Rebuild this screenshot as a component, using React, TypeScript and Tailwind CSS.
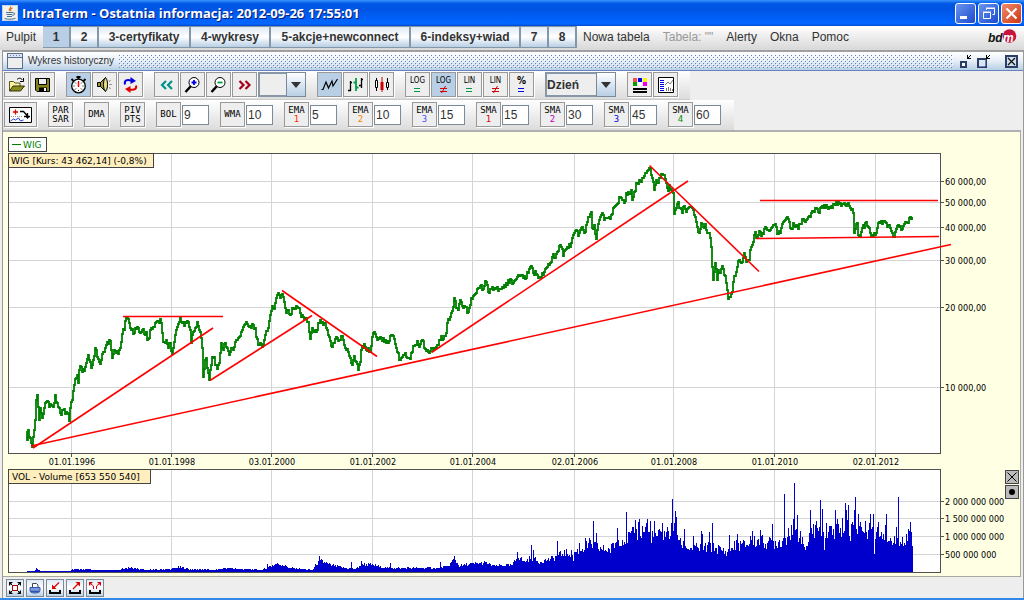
import type { ReactNode } from 'react';
import clsx from 'clsx';

type Point = [number, number];

const GRID_X = [71, 171, 271, 372, 472, 574, 673, 774, 875];
const DATES = [
  '01.01.1996',
  '01.01.1998',
  '03.01.2000',
  '01.01.2002',
  '01.01.2004',
  '02.01.2006',
  '01.01.2008',
  '01.01.2010',
  '02.01.2012',
];

const PRICE_TICKS: [number, string][] = [
  [181, '60 000,00'],
  [202, '50 000,00'],
  [227, '40 000,00'],
  [260, '30 000,00'],
  [307, '20 000,00'],
  [387, '10 000,00'],
];

const VOLUME_TICKS: [number, string][] = [
  [501, '2 000 000 000'],
  [518, '1 500 000 000'],
  [536, '1 000 000 000'],
  [554, '500 000 000'],
];

const TREND_LINES = [
  'M123 316.5H223',
  'M33 448L213 328',
  'M31 446L951 244.5',
  'M210 380.5L312 315.5',
  'M282 290.5L377 356.5',
  'M431.5 352.5L688 181',
  'M649.5 165.5L759 271.5',
  'M760 200.5H938',
  'M756 238.5L939 236.5',
];

const WIG =
  '27,431 28,440 29,430 31,438 32,443 33,447 35,430 36,420 37,400 38,395 39,407 40,420 41,408 43,418 45,408 46,403 48,401 50,407 52,405 54,407 56,395 57,402 59,407 61,413 62,415 64,410 66,414 69,414 70,421 71,408 73,400 75,385 76,379 78,375 79,383 80,370 81,366 83,372 85,371 87,363 89,355 90,360 92,368 94,360 96,348 98,357 100,362 102,360 104,352 106,348 108,342 111,341 112,350 113,358 115,350 117,353 120,350 122,342 123,334 125,330 126,321 128,318 130,323 132,330 134,334 136,328 138,327 140,332 143,330 145,334 147,332 148,340 150,338 152,328 154,327 156,323 158,321 160,323 161,319 163,333 164,342 166,343 167,340 169,348 171,343 173,354 174,348 176,335 178,327 180,322 181,318 183,323 185,326 186,322 188,321 190,327 191,330 192,343 194,332 196,328 198,322 200,330 202,338 203,348 204,377 206,360 207,358 209,373 210,380 211,370 213,357 215,357 216,365 218,369 220,363 222,343 224,350 225,344 228,348 230,355 232,348 234,350 236,342 238,340 240,337 243,330 246,324 247,322 250,327 252,328 254,325 256,328 257,337 259,345 261,343 264,345 266,335 269,328 271,315 273,306 275,309 277,298 279,293 281,298 283,294 285,302 287,313 289,310 291,315 293,308 296,309 299,308 301,313 304,317 306,318 309,322 310,332 311,339 313,328 315,332 317,332 319,323 321,320 324,325 326,323 328,330 330,337 332,346 335,343 337,337 340,340 343,336 345,345 347,350 349,352 351,358 353,365 355,356 357,362 359,370 361,362 362,350 365,344 367,350 369,348 371,351 373,337 375,332 377,337 380,339 383,341 386,340 390,341 392,335 395,339 397,348 399,353 400,360 403,357 406,353 408,358 411,359 412,353 414,346 416,345 418,341 420,347 423,340 425,348 428,350 431,351 435,348 438,345 441,340 445,336 447,333 448,323 450,320 452,313 454,307 455,298 457,308 459,310 461,300 464,308 466,307 468,313 470,308 472,298 475,295 477,293 479,288 481,286 483,290 486,281 488,285 490,293 493,287 496,289 498,287 501,289 504,288 507,283 511,279 514,283 517,279 521,276 523,275 526,279 529,273 531,267 534,273 536,271 539,278 542,278 545,272 548,267 551,263 553,257 556,258 558,252 560,246 562,247 564,256 566,250 569,248 572,243 574,235 577,230 579,236 582,228 585,233 587,225 589,217 592,212 593,228 595,225 597,239 598,230 600,220 603,213 605,220 607,218 610,217 612,215 615,207 617,205 619,203 621,197 623,200 625,203 627,193 629,192 630,194 632,190 633,200 635,192 638,183 641,181 644,178 646,173 650,168 652,175 654,182 655,190 657,180 658,183 660,178 663,174 665,175 667,183 669,191 670,185 672,189 674,193 674,207 675,214 677,208 679,202 681,208 683,213 685,206 687,212 690,207 692,207 694,210 696,217 699,232 700,233 702,223 704,227 706,224 708,233 710,233 712,247 713,267 714,280 716,263 718,280 719,270 721,273 723,266 725,275 727,283 728,290 729,299 731,297 733,292 734,282 736,276 738,267 740,260 742,263 745,253 747,262 750,260 751,250 753,245 754,242 756,232 757,238 759,235 761,232 764,234 766,227 769,230 772,228 774,225 776,224 778,234 781,233 783,224 786,220 788,217 790,222 792,229 794,223 796,227 799,229 801,224 803,219 806,222 809,217 812,213 814,211 817,208 820,213 822,207 826,208 830,207 833,208 836,205 839,202 842,206 845,203 848,204 850,206 853,209 854,213 855,233 858,223 859,235 861,237 863,228 866,223 869,227 871,233 874,237 876,235 878,228 880,222 883,224 886,222 888,227 890,225 892,231 895,237 897,229 900,227 903,229 906,222 908,223 910,218 911,217 913,218';

// [x, typical bar height]
const VOLUME_LEVELS: Point[] = [
  [27, 1], [34, 1], [36, 3], [41, 1], [70, 1], [72, 3], [84, 3], [95, 2], [119, 2], [125, 4], [131, 4], [145, 2],
  [172, 3], [178, 5], [188, 3], [215, 2], [225, 4], [240, 3], [262, 2], [268, 5], [276, 8], [283, 7], [290, 4],
  [312, 2], [316, 8], [321, 11], [330, 7], [345, 4], [355, 3], [362, 8], [373, 7], [385, 4], [440, 4], [448, 6],
  [454, 13], [459, 6], [470, 8], [486, 9], [494, 6], [512, 7], [518, 16], [524, 10], [531, 15], [538, 10], [550, 13],
  [558, 16], [563, 19], [572, 18], [580, 22], [590, 28], [600, 23], [610, 22], [617, 32], [625, 33], [635, 38],
  [645, 42], [652, 36], [660, 36], [670, 40], [676, 42], [680, 28], [690, 23], [700, 24], [710, 25], [718, 23],
  [727, 19], [735, 27], [745, 27], [757, 31], [770, 29], [780, 30], [790, 38], [796, 39], [801, 29], [806, 25],
  [812, 40], [820, 43], [830, 42], [840, 41], [850, 44], [858, 44], [866, 41], [878, 41], [884, 39], [892, 29],
  [900, 33], [905, 28], [910, 36], [912, 28],
];

const VOLUME_SPIKES: Record<number, number> = {
  267: 8, 319: 16, 320: 12, 351: 10, 361: 11, 390: 9, 440: 10, 454: 16, 517: 20, 531: 27, 533: 22, 557: 31, 573: 11,
  579: 29, 585: 34, 593: 51, 596: 39, 617: 44, 626: 60, 635: 52, 638: 50, 639: 53, 646: 49, 647: 53, 650: 51, 654: 51,
  662: 49, 672: 73, 675: 61, 676: 55, 684: 43, 693: 36, 701: 41, 702: 38, 709: 40, 712: 49, 729: 37, 737: 38, 750: 36,
  752: 41, 760: 42, 772: 48, 784: 78, 788: 44, 793: 53, 794: 89, 797: 57, 800: 41, 805: 22, 810: 62, 813: 48, 816: 51,
  820: 72, 822: 63, 824: 22, 835: 62, 837: 53, 842: 54, 845: 69, 846: 62, 848: 67, 850: 31, 855: 75, 854: 62, 858: 58,
  860: 50, 869: 49, 870: 58, 873: 58, 874: 18, 878: 50, 885: 47, 886: 58, 896: 45, 898: 75, 906: 38, 908: 43, 910: 50,
  911: 40, 912: 26,
};

function noise(i: number) {
  const v = Math.sin(i * 12.9898) * 43758.5453;
  return v - Math.floor(v);
}

function levelAt(x: number) {
  const i = VOLUME_LEVELS.findIndex((p) => p[0] > x);
  if (i <= 0) return VOLUME_LEVELS[i === 0 ? 0 : VOLUME_LEVELS.length - 1][1];
  const [x0, h0] = VOLUME_LEVELS[i - 1];
  const [x1, h1] = VOLUME_LEVELS[i];
  return h0 + ((h1 - h0) * (x - x0)) / (x1 - x0);
}

function buildPricePath() {
  const pts = WIG.split(' ').map((p) => p.split(',').map(Number) as Point);
  let d = `M${pts[0][0]} ${pts[0][1]}`;
  pts.forEach(([x, y], i) => {
    if (i === 0) return;
    const [px, py] = pts[i - 1];
    for (let sx = px + 1; sx < x; sx++) {
      const mid = py + ((y - py) * (sx - px)) / (x - px);
      d += `V${Math.round(mid + (noise(sx) - 0.5) * 6)}H${sx}`;
    }
    d += `V${y}H${x}`;
  });
  return d;
}

function buildVolumePath() {
  let d = '';
  for (let x = 27; x <= 912; x++) {
    const h = VOLUME_SPIKES[x] ?? Math.max(1, Math.round(levelAt(x) * (0.78 + noise(x) * 0.45)));
    d += `M${x} 572v-${h}h1v${h}z`;
  }
  return d;
}

const PRICE_PATH = buildPricePath();
const VOLUME_PATH = buildVolumePath();

function Chart() {
  return (
    <svg
      viewBox="3 132 1017 444"
      className="block h-auto w-full font-['DejaVu_Sans','Liberation_Sans',sans-serif] text-[9px]"
      role="img"
      aria-label="WIG"
    >
      <g shapeRendering="crispEdges">
        <rect x="8.5" y="137.5" width="38" height="14" fill="#fff" stroke="#444" />
        <rect x="12" y="144" width="9" height="1" fill="#008000" />
        <rect x="8" y="153" width="933" height="301" fill="#fff" />
        <rect x="8" y="469" width="933" height="104" fill="#fff" />
        {GRID_X.map((x) => (
          <path key={x} d={`M${x + 0.5} 154V453M${x + 0.5} 470V572`} stroke="#d4d4d4" />
        ))}
        {[...PRICE_TICKS, ...VOLUME_TICKS].map(([y]) => (
          <path key={y} d={`M9 ${y + 0.5}H940`} stroke="#d4d4d4" />
        ))}
        <path d={VOLUME_PATH} fill="#0000cc" />
        {GRID_X.map((x) => (
          <path key={x} d={`M${x + 0.5} 454v3`} stroke="#555" />
        ))}
        {[...PRICE_TICKS, ...VOLUME_TICKS].map(([y]) => (
          <path key={y} d={`M941 ${y + 0.5}h3`} stroke="#555" />
        ))}
        <rect x="8.5" y="153.5" width="932" height="300" fill="none" stroke="#505050" />
        <rect x="8.5" y="469.5" width="932" height="103" fill="none" stroke="#505050" />
      </g>

      <path d={PRICE_PATH} fill="none" stroke="#008000" strokeWidth="1.8" />
      {TREND_LINES.map((d) => (
        <path key={d} d={d} stroke="#f00" strokeWidth="1.6" />
      ))}

      {/* Series captions */}
      <g shapeRendering="crispEdges" fill="#ffefbf" stroke="#444">
        <rect x="8.5" y="153.5" width="145" height="14" />
        <rect x="8.5" y="469.5" width="142" height="14" />
      </g>
      <text x="23" y="148" fill="#008000">WIG</text>
      <text x="11" y="164">WIG [Kurs: 43 462,14] (-0,8%)</text>
      <text x="12" y="480">VOL - Volume [653 550 540]</text>

      <g className="font-['DejaVu_Sans_Condensed','Liberation_Sans',sans-serif]">
        {GRID_X.map((x, i) => (
          <text key={x} x={x + 1} y="465" textAnchor="middle">
            {DATES[i]}
          </text>
        ))}
        {[...PRICE_TICKS, ...VOLUME_TICKS].map(([y, label]) => (
          <text key={label} x="945" y={y + 4}>
            {label}
          </text>
        ))}
      </g>
    </svg>
  );
}

function Icon({ children, w = 23 }: { children: ReactNode; w?: number }) {
  return (
    <svg width={w} height="23" viewBox={`0 0 ${w} 23`} fill="none" className="block shrink-0">
      {children}
    </svg>
  );
}

function ToolButton({
  label,
  active,
  wide,
  children,
}: {
  label: string;
  active?: boolean;
  wide?: boolean;
  children: ReactNode;
}) {
  return (
    <button
      type="button"
      aria-label={label}
      className={clsx(
        'flex h-[25px] shrink-0 flex-col items-center justify-center border border-[#999] shadow-[1px_1px_0_#fff]',
        wide ? 'w-[33px]' : 'w-[25px]',
        active ? 'bg-[#b8cfe5]' : 'bg-[#eee]',
      )}
    >
      {children}
    </button>
  );
}

function Group({ children }: { children: ReactNode }) {
  return <div className="flex items-center gap-px">{children}</div>;
}

function ScaleButton({ text, sign, active }: { text: string; sign: string; active?: boolean }) {
  return (
    <ToolButton label={`${text} ${sign}`} active={active}>
      <span
        className={clsx(
          "font-['DejaVu_Sans_Condensed','Liberation_Sans',sans-serif] leading-[9px]",
          text === '%' ? 'text-[10px] font-bold' : 'text-[8px]',
        )}
      >
        {text}
      </span>
      <Mark sign={sign} blue={text === '%'} />
    </ToolButton>
  );
}

function Mark({ sign, blue }: { sign: string; blue?: boolean }) {
  if (sign === '≠') {
    return (
      <svg width="9" height="8" viewBox="0 0 9 8" fill="none" stroke="#d00000" className="block">
        <path d="M1 3.5h7M1 6.5h7M6.5 1L2.5 8" />
      </svg>
    );
  }
  return (
    <svg width="9" height="8" viewBox="0 0 9 8" fill="none" stroke={blue ? '#0000e0' : '#009a44'} className="block">
      <path d="M1 3.5h6M1 6.5h6" />
    </svg>
  );
}

function Combo({ label, value, className }: { label: string; value: string; className: string }) {
  return (
    <div className={clsx('relative h-[25px]', className)}>
      <select
        aria-label={label}
        className="block h-full w-full appearance-none border-2 border-[#8797a7] bg-[#eee] text-[12px] leading-4 font-bold text-[#333]"
      >
        <option>{value}</option>
      </select>
      <span className="pointer-events-none absolute inset-y-0 right-0 flex w-5 items-center justify-center border border-[#7a8a99] bg-linear-to-b from-white to-[#b8cfe5]">
        <svg width="10" height="6" viewBox="0 0 10 6" className="block">
          <path d="M0 0h10L5 6z" fill="#333" />
        </svg>
      </span>
    </div>
  );
}

function TextLabel({ top, bottom, color }: { top: string; bottom?: string; color?: string }) {
  return (
    <>
      <span className="font-['DejaVu_Sans_Mono',monospace] text-[9px] leading-[9px] text-black">{top}</span>
      {bottom && (
        <span className={clsx("font-['DejaVu_Sans_Mono',monospace] text-[9px] leading-[9px]", color ?? 'text-black')}>
          {bottom}
        </span>
      )}
    </>
  );
}

const AVERAGES = [
  { name: 'BOL', value: '9' },
  { name: 'WMA', value: '10' },
  { name: 'EMA', index: '1', color: 'text-[#ff2a00]', value: '5' },
  { name: 'EMA', index: '2', color: 'text-[#ff7f00]', value: '10' },
  { name: 'EMA', index: '3', color: 'text-[#5050ff]', value: '15' },
  { name: 'SMA', index: '1', color: 'text-[#e00000]', value: '15' },
  { name: 'SMA', index: '2', color: 'text-[#c000c0]', value: '30' },
  { name: 'SMA', index: '3', color: 'text-[#0000e0]', value: '45' },
  { name: 'SMA', index: '4', color: 'text-[#009000]', value: '60' },
];

const DESKTOPS = [
  { label: '1', width: 'w-7' },
  { label: '2', width: 'w-7' },
  { label: '3-certyfikaty', width: 'w-[92px]' },
  { label: '4-wykresy', width: 'w-20' },
  { label: '5-akcje+newconnect', width: 'w-[140px]' },
  { label: '6-indeksy+wiad', width: 'w-[110px]' },
  { label: '7', width: 'w-7' },
  { label: '8', width: 'w-7' },
];

function TitleBar() {
  const box = 'flex size-[21px] items-center justify-center rounded-[3px] border border-white';
  return (
    <header className="flex h-[26px] items-center bg-[linear-gradient(to_bottom,#3a93ff_0%,#0058e6_14%,#0054e3_35%,#0062fb_75%,#0066ff_92%,#0048c8_100%)] px-0.5">
      <svg width="16" height="16" viewBox="0 0 16 16" fill="none" className="block shrink-0">
        <rect x="0.5" y="0.5" width="15" height="15" fill="#f2f2ec" stroke="#c8d4e0" />
        <path d="M8.5 1.5c1.5 1.5-2.5 2.5-1 4.5M10.5 3c-2 1-2.5 1.5-1.5 3.2" stroke="#e0701a" strokeWidth="1.2" />
        <path d="M4 7.5h7M4.5 9.5h6M5 11.5h5M11 8c2.5-.5 2.5 2-.5 2.5" stroke="#4a6f96" />
        <path d="M2.5 13.5c3 1 8 1 11-.2" stroke="#4a6f96" />
      </svg>
      <h1 className="ml-1 flex-1 truncate font-['Open_Sans','Noto_Sans',sans-serif] text-[13px] leading-5 font-bold text-white [text-shadow:1px_1px_0_#0a1a78]">
        IntraTerm - Ostatnia informacja: 2012-09-26 17:55:01
      </h1>
      <div className="flex gap-0.5">
        <button type="button" aria-label="Minimalizuj" className={clsx(box, 'bg-linear-to-br from-[#6a94f0] to-[#1c48cc]')}>
          <Icon w={19}>
            <path d="M4 15.5h7" stroke="#fff" strokeWidth="3" />
          </Icon>
        </button>
        <button type="button" aria-label="Przywróć" className={clsx(box, 'bg-linear-to-br from-[#6a94f0] to-[#1c48cc]')}>
          <Icon w={19}>
            <path d="M7.5 8V6.5h8v6h-2M4.5 10.5h7v6h-7zM4 10h8M7 6h9" stroke="#fff" />
          </Icon>
        </button>
        <button type="button" aria-label="Zamknij" className={clsx(box, 'bg-linear-to-br from-[#f08a68] to-[#cc3010]')}>
          <Icon w={19}>
            <path d="M4.5 6.5l10 10M14.5 6.5l-10 10" stroke="#fff" strokeWidth="2.2" />
          </Icon>
        </button>
      </div>
    </header>
  );
}

function MenuBar() {
  return (
    <nav className="flex h-6 items-start bg-linear-to-b from-white to-[#d8d8d8] text-[12px] leading-[22px] text-[#333]">
      <span className="w-[43px] shrink-0 pl-1.5">Pulpit</span>
      {DESKTOPS.map(({ label, width }, i) => (
        <button
          key={label}
          type="button"
          className={clsx(
            'h-[22px] shrink-0 border border-r-2 border-l-0 border-[#8497a9] text-center leading-5 font-bold whitespace-nowrap',
            width,
            i === 0 ? 'bg-[#b8cfe5]' : 'bg-linear-to-b from-[#dfeaf4] via-white to-[#b8cfe5]',
          )}
        >
          {label}
        </button>
      ))}
      <div className="flex flex-1 gap-[13px] pl-1.5 whitespace-nowrap">
        <button type="button">Nowa tabela</button>
        <button type="button" disabled className="text-[#999]">
          Tabela: &quot;&quot;
        </button>
        <button type="button">Alerty</button>
        <button type="button">Okna</button>
        <button type="button">Pomoc</button>
      </div>
      <svg width="32" height="20" viewBox="0 0 32 20" className="mr-1.5 block shrink-0" aria-label="bdm">
        <circle cx="23.5" cy="10" r="6.8" fill="#c8143c" />
        <text x="2" y="16" className="text-[12px] font-bold italic" fill="#111">
          bd
        </text>
        <text x="17" y="16" className="text-[12px] font-bold italic" fill="#fff">
          m
        </text>
      </svg>
    </nav>
  );
}

function FrameTitle() {
  return (
    <div className="flex h-[19px] items-center border-b border-[#6382bf] bg-linear-to-b from-white via-[#e6eef6] to-[#b8cfe5] px-1">
      <svg width="16" height="16" viewBox="0 0 16 16" fill="none" shapeRendering="crispEdges" className="block shrink-0">
        <rect x="0.5" y="0.5" width="15" height="15" rx="1" fill="#eee" stroke="#5b6f8a" />
        <path d="M1 2.5h14" stroke="#dbe6f2" strokeWidth="3" />
        <path d="M3 2.5h1M6 2.5h1M9 2.5h1M12 2.5h1" stroke="#6382bf" />
        <path d="M1 4.5h14" stroke="#5b6f8a" />
      </svg>
      <h2 className="ml-[5px] text-[10px] leading-4 whitespace-nowrap text-[#333]">Wykres historyczny</h2>
      <svg height="13" className="mx-[5px] block min-w-0 flex-1" shapeRendering="crispEdges" aria-hidden="true">
        <defs>
          <pattern id="bumps" width="4" height="4" patternUnits="userSpaceOnUse">
            <path d="M0 0h1v1h-1zM2 2h1v1h-1z" fill="#6382bf" />
            <path d="M1 1h1v1h-1zM3 3h1v1h-1z" fill="#fff" />
          </pattern>
        </defs>
        <rect width="100%" height="13" fill="url(#bumps)" />
      </svg>
      <div className="flex gap-[3px]">
        <button type="button" aria-label="Do ikony">
          <svg width="15" height="15" viewBox="0 0 15 15" fill="none" shapeRendering="crispEdges" className="block">
            <path d="M3 8h5v5H3z" stroke="#2b3f66" strokeWidth="2" fill="#fff" />
            <path d="M9.5 1v4M9 4.5h4M10 4l3-3" stroke="#000" />
          </svg>
        </button>
        <button type="button" aria-label="Maksymalizuj">
          <svg width="15" height="15" viewBox="0 0 15 15" fill="none" shapeRendering="crispEdges" className="block">
            <path d="M2 5h8v8H2z" fill="#dbe6f2" stroke="#2b3f66" strokeWidth="2" />
            <path d="M9 6v6M3 12h6" stroke="#6382bf" />
            <path d="M10 0h5v4h-5z" fill="#f4f8fb" />
            <path d="M10.5 1v4M10 4.5h4M11 4l3-3" stroke="#000" />
          </svg>
        </button>
        <button type="button" aria-label="Zamknij okno" className="ml-2.5">
          <svg width="15" height="15" viewBox="0 0 15 15" fill="none" className="block">
            <path d="M2 2h11v11H2z" fill="#cfdeec" stroke="#2b3f66" strokeWidth="2" />
            <path d="M4 4l7 7M11 4l-7 7" stroke="#111" strokeWidth="1.2" />
          </svg>
        </button>
      </div>
    </div>
  );
}

function MainToolbar() {
  return (
    <div className="flex h-[29px] w-fit items-start gap-[11px] border-b border-[#ccc] bg-linear-to-b from-white to-[#dcdcdc] pt-px pr-3 pl-px">
      <Group>
        <ToolButton label="Otwórz">
          <Icon>
            <path d="M4.5 18V8.5h4l1.5 1.5h5v3" fill="#f8f4a0" stroke="#55551a" />
            <path d="M4.5 18l3.5-5h11.5l-4 5z" fill="#8a8a20" stroke="#33330a" />
            <path d="M12 6.5c2-2 4-1.5 5.5.5M18.5 5v3.500H15" stroke="#000" />
          </Icon>
        </ToolButton>
        <ToolButton label="Zapisz">
          <Icon>
            <path d="M4.5 5.5h14v13H6l-1.5-1.5z" fill="#84841c" stroke="#000" />
            <path d="M7.5 5.5h8v6h-8z" fill="#eee" stroke="#000" />
            <path d="M8 14.5h8v4H8z" fill="#000" />
            <path d="M13 15h2v3h-2z" fill="#fff" />
          </Icon>
        </ToolButton>
      </Group>
      <Group>
        <ToolButton label="Notowania ciągłe" active>
          <Icon>
            <circle cx="11.5" cy="13" r="6.8" fill="#fff" stroke="#000" strokeWidth="1.3" />
            <path d="M9.5 4h4M11.5 4v2M4.5 6l2 2M18.5 6l-2 2" stroke="#000" strokeWidth="1.8" />
            <path
              d="M11.5 8v1M11.5 17v1M6.5 13h1M15.5 13h1M8 9.5l1 1M15 9.5l-1 1M8 16.5l1-1M15 16.5l-1-1"
              stroke="#000"
            />
            <path d="M11.5 8.5V14" stroke="#f00" strokeWidth="1.5" />
          </Icon>
        </ToolButton>
        <ToolButton label="Dźwięk">
          <Icon>
            <path d="M4.5 9.5h3l5-5v14l-5-5h-3z" fill="#a09a30" stroke="#000" />
            <path d="M7.5 9.5v4" stroke="#000" />
            <ellipse cx="12.5" cy="11.5" rx="2" ry="6.5" fill="#e8e088" stroke="#000" />
            <path d="M16 8.5l2-1.5M16.5 11.5h2.500M16 14.5l2 1.5" stroke="#444" strokeDasharray="1 1" />
          </Icon>
        </ToolButton>
        <ToolButton label="Odśwież">
          <Icon>
            <path d="M6 11.5C5 7.5 8 6 12 7.5" stroke="#0000e0" strokeWidth="2" />
            <path d="M11.5 4l5.5 4-5.5 3z" fill="#0000e0" />
            <path d="M17 12.5c1 3.500-2 5-6 4" stroke="#e00000" strokeWidth="2" />
            <path d="M11.5 20L6 16l5.5-3z" fill="#e00000" />
          </Icon>
        </ToolButton>
      </Group>
      <Group>
        <ToolButton label="Wstecz">
          <Icon>
            <path d="M11 8l-4 4 4 4M17 8l-4 4 4 4" stroke="#00908c" strokeWidth="2.2" />
          </Icon>
        </ToolButton>
        <ToolButton label="Powiększ">
          <Icon>
            <path d="M10 13l-5.5 6" stroke="#000" strokeWidth="2.5" />
            <circle cx="13" cy="9.5" r="5" fill="#fff" stroke="#000" />
            <path d="M10.5 9.5h5M13 7v5" stroke="#0000e0" strokeWidth="1.8" />
          </Icon>
        </ToolButton>
        <ToolButton label="Pomniejsz">
          <Icon>
            <path d="M10 13l-5.5 6" stroke="#000" strokeWidth="2.5" />
            <circle cx="13" cy="9.5" r="5" fill="#fff" stroke="#000" />
            <path d="M10.5 9.5h5" stroke="#00a040" strokeWidth="1.8" />
          </Icon>
        </ToolButton>
        <ToolButton label="Dalej">
          <Icon>
            <path d="M6.5 8l4 4-4 4M12.5 8l4 4-4 4" stroke="#a80018" strokeWidth="2.2" />
          </Icon>
        </ToolButton>
        <Combo label="Zakres" value="" className="w-12" />
      </Group>
      <Group>
        <ToolButton label="Wykres liniowy" active>
          <Icon>
            <path d="M3.5 16.5H5L8 9l2.5 6L14 8l1 5 4.5-7" stroke="#000" strokeWidth="1.2" />
          </Icon>
        </ToolButton>
        <ToolButton label="Wykres słupkowy">
          <Icon>
            <path d="M6.5 8v10M4 17.5h3M6 9.5h2M17.5 5v10M15 12.5h3M17 6.5h2" stroke="#000" strokeWidth="1.3" />
            <path d="M12 5v13M9.5 9.5h3M12 14.5h2.500" stroke="#00a040" strokeWidth="1.8" />
          </Icon>
        </ToolButton>
        <ToolButton label="Wykres świecowy">
          <Icon>
            <path d="M6.5 5v13M17.5 5v12" stroke="#000" />
            <path d="M5.5 7.5h2v7h-2zM16.5 9.5h2v5h-2z" fill="#fff" stroke="#000" />
            <path d="M12 4v15" stroke="#d00000" />
            <path d="M10.5 9h3v8h-3z" fill="#d00000" />
          </Icon>
        </ToolButton>
      </Group>
      <Group>
        <ScaleButton text="LOG" sign="=" />
        <ScaleButton text="LOG" sign="≠" active />
        <ScaleButton text="LIN" sign="=" />
        <ScaleButton text="LIN" sign="≠" />
        <ScaleButton text="%" sign="=" />
      </Group>
      <Combo label="Interwał" value="Dzień" className="w-[71px]" />
      <Group>
        <ToolButton label="Kolory">
          <Icon>
            <path d="M5 5h4v4H5z" fill="#ff4a4a" />
            <path d="M10 5h4v4h-4z" fill="#0000f0" />
            <path d="M15 5h4v4h-4z" fill="#fff000" />
            <path d="M5 9h4v4H5z" fill="#00a000" />
            <path d="M10 9h4v4h-4z" fill="#fff" />
            <path d="M15 9h4v4h-4z" fill="#f000f0" />
            <path d="M5 16h14M5 19h14" stroke="#000" strokeWidth="2" />
          </Icon>
        </ToolButton>
        <ToolButton label="Raport">
          <Icon>
            <path d="M4.5 4.5h15v15h-15z" fill="#fff" stroke="#000" />
            <path d="M6 7.5h4M6 9.5h4M6 11.5h4M6 13.5h4M6 15.5h4M6 17.5h4" stroke="#0000e0" />
            <path d="M11 12l3-3 2 2 3-4M12.5 18v-3M14.5 18v-4M16.5 18v-3M18.5 18v-2" stroke="#777" />
          </Icon>
        </ToolButton>
      </Group>
    </div>
  );
}

function IndicatorToolbar() {
  return (
    <div className="flex h-[30px] w-fit items-start gap-[11px] bg-linear-to-b from-white to-[#dcdcdc] pt-0.5 pr-[13px] pl-px">
      <ToolButton label="Nowy wskaźnik" wide>
        <Icon w={31}>
          <path d="M4.5 4.5h22v15h-22z" fill="#fff" stroke="#000" />
          <path d="M8 9h5M10.5 6.5v5" stroke="#e00000" strokeWidth="1.3" />
          <path d="M15 8.5h3.500l4 4.500M22.5 10v4M19 13.5h6" stroke="#000" strokeWidth="1.3" />
          <path d="M20 13h5l-2.500 3z" fill="#000" />
          <path d="M6 13.5h12" stroke="#999" strokeDasharray="1 1" />
          <path d="M5.500 18l3-2 2 1 3-2 2 3 3-1" stroke="#2040e0" />
        </Icon>
      </ToolButton>
      <ToolButton label="Parabolic SAR">
        <TextLabel top="PAR" bottom="SAR" />
      </ToolButton>
      <ToolButton label="DMA">
        <TextLabel top="DMA" />
      </ToolButton>
      <ToolButton label="Pivot points">
        <TextLabel top="PIV" bottom="PTS" />
      </ToolButton>
      {AVERAGES.map(({ name, index, color, value }) => (
        <Group key={name + (index ?? '')}>
          <ToolButton label={`${name} ${index ?? ''}`}>
            <TextLabel top={name} bottom={index} color={color} />
          </ToolButton>
          <input
            type="text"
            aria-label={`Okres ${name} ${index ?? ''}`}
            defaultValue={value}
            className="h-5 w-[27px] border border-[#7a8a99] bg-white pl-px text-[12px] leading-4 text-[#333]"
          />
        </Group>
      ))}
    </div>
  );
}

function StatusButton({ label, children }: { label: string; children: ReactNode }) {
  return (
    <button
      type="button"
      aria-label={label}
      className="flex size-[18px] items-center justify-center border border-[#7a8a99] bg-linear-to-b from-[#dfeaf4] via-white to-[#b8cfe5]"
    >
      <svg width="14" height="14" viewBox="0 0 14 14" fill="none" className="block">
        {children}
      </svg>
    </button>
  );
}

function StatusBar() {
  return (
    <footer className="flex h-[21px] items-center gap-0.5 bg-[#eee] pl-[3px]">
      <StatusButton label="Dopasuj">
        <path d="M4.5 4.5h5v5h-5z" fill="#fff" stroke="#b00000" />
        <path d="M1 1h4L1 5zM13 1H9l4 4zM1 13h4L1 9zM13 13H9l4-4z" fill="#000" />
        <path d="M1.5 1.5l3 3M12.5 1.5l-3 3M1.5 12.5l3-3M12.5 12.5l-3-3" stroke="#000" />
      </StatusButton>
      <StatusButton label="Drukuj">
        <path d="M4.5 6.5v-4h4L10 4v2.500" fill="#fff" stroke="#445" />
        <path d="M2 6.5h10v3c0 1.5-1.5 2.500-5 2.500s-5-1-5-2.500z" fill="#7a9be0" stroke="#3355aa" />
        <path d="M2.500 10.5h9" stroke="#3355aa" strokeWidth="1.5" />
      </StatusButton>
      <StatusButton label="Zadokuj">
        <path d="M2 9v3h10V9" stroke="#000" strokeWidth="2" />
        <path d="M11 1.5l-5 5" stroke="#e00000" strokeWidth="1.3" />
        <path d="M4 3.5V8h4.500z" fill="#e00000" />
      </StatusButton>
      <StatusButton label="Oddokuj">
        <path d="M2 9v3h10V9" stroke="#000" strokeWidth="2" />
        <path d="M5 8l5-5" stroke="#e00000" strokeWidth="1.3" />
        <path d="M7.500 1H12v4.500z" fill="#e00000" />
      </StatusButton>
      <StatusButton label="Oddokuj wszystkie">
        <path d="M2 9v3h10V9" stroke="#000" strokeWidth="2" />
        <path d="M5.5 8V5L3 3M8.5 8V5L11 3" stroke="#e00000" />
        <path d="M1 1h4L1 5zM13 1H9l4 4z" fill="#e00000" />
      </StatusButton>
    </footer>
  );
}

function PaneButton({ label, children }: { label: string; children: ReactNode }) {
  return (
    <button
      type="button"
      aria-label={label}
      className="flex size-[14px] items-center justify-center border border-[#444] bg-[#bbb]"
    >
      <svg width="12" height="12" viewBox="0 0 12 12" className="block">
        {children}
      </svg>
    </button>
  );
}

export default function App() {
  return (
    <div className="flex min-h-screen flex-col border-b-2 border-[#3388e8] bg-[#eee] font-['Liberation_Sans',Arial,sans-serif] text-black">
      <TitleBar />
      <MenuBar />
      <main className="ml-0.5 flex flex-1 flex-col border-x border-[#999]">
        <div className="border-t-2 border-[#a0a0a0]">
          <FrameTitle />
        </div>
        <MainToolbar />
        <IndicatorToolbar />
        <section className="relative mr-0.5 border-t-2 border-r border-b border-t-[#b0b0b0] border-r-[#a8a8a0] border-b-[#a8a8a0] bg-[#ffffe4]">
          <Chart />
          <div className="absolute top-[338px] right-px flex flex-col gap-px">
            <PaneButton label="Zamknij wykres">
              <path d="M1.5 1.5l9 9M10.5 1.5l-9 9" stroke="#000" />
            </PaneButton>
            <PaneButton label="Opcje wykresu">
              <circle cx="6" cy="6" r="3" fill="#000" />
            </PaneButton>
          </div>
        </section>
        <StatusBar />
      </main>
    </div>
  );
}
